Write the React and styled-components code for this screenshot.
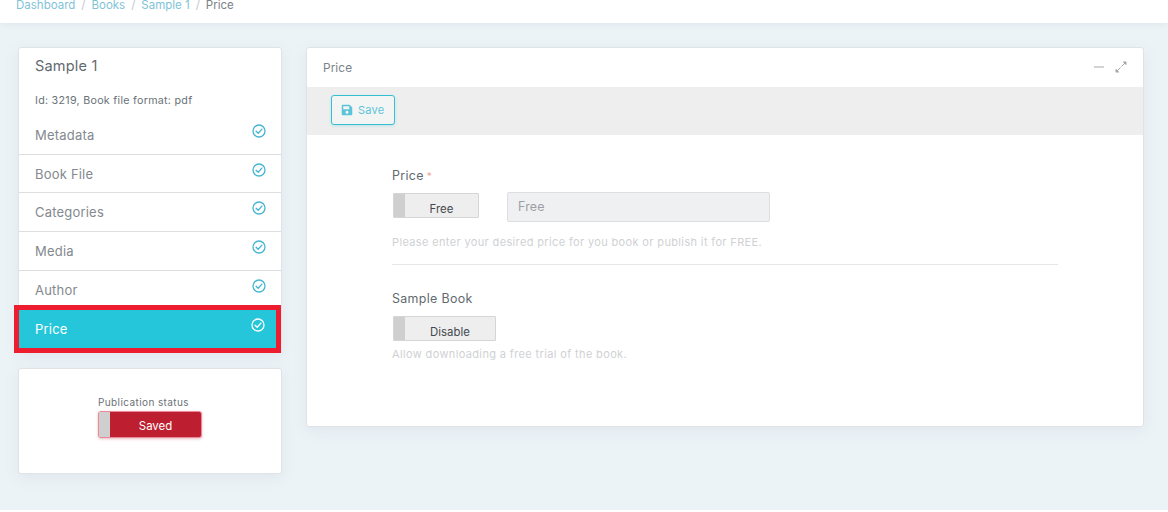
import React from "react";
import styled, { createGlobalStyle } from "styled-components";
import { FaSave } from "react-icons/fa";

const Global = createGlobalStyle`
  html, body { margin: 0; padding: 0; background: #ecf3f7; }
  body { font-family: "Inter", "Open Sans", "Liberation Sans", sans-serif; height: 512px; overflow: hidden; }
`;

const Header = styled.header`
  height: 23px;
  background: #fff;
  box-shadow: 0 1px 6px rgba(120, 140, 160, 0.12);
  overflow: hidden;
`;

const Crumbs = styled.div`
  display: flex;
  align-items: center;
  gap: 6px;
  padding-left: 16px;
  margin-top: -3px;
  height: 16px;
  font-size: 11.5px;
  color: #c4c9cd;
`;

const Crumb = styled.span`
  color: ${(p) => (p.$current ? "#7b8288" : "#7fc3d8")};
`;

const Page = styled.main`
  display: flex;
  align-items: flex-start;
  gap: 24px;
  height: 487px;
  box-sizing: border-box;
  padding: 24px 24px 0 18px;
`;

const BottomEdge = styled.footer`
  height: 2px;
  background: #fff;
`;

const Side = styled.aside`
  width: 264px;
  flex: none;
  display: flex;
  flex-direction: column;
  gap: 15px;
`;

const Card = styled.section`
  background: #fff;
  border: 1px solid #dfe3e6;
  border-radius: 3px;
  box-shadow: 0 4px 14px rgba(120, 140, 160, 0.1);
  box-sizing: border-box;
`;

const BookTitle = styled.h2`
  margin: 0;
  padding: 8px 16px 0;
  height: 26px;
  font-size: 14.5px;
  line-height: 20px;
  letter-spacing: 0.2px;
  font-weight: 400;
  color: #62696f;
`;

const BookInfo = styled.p`
  margin: 0;
  padding: 12px 16px 0;
  height: 22px;
  font-size: 10.7px;
  line-height: 14px;
  letter-spacing: 0.28px;
  color: #6b7278;
`;

const StepRow = styled.div`
  display: flex;
  justify-content: space-between;
  height: 38.7px;
  box-sizing: border-box;
  padding: 0 15px 0 16px;
  font-size: 13px;
  letter-spacing: 0.2px;
  color: ${(p) => (p.$active ? "#fff" : "#83898e")};
  background: ${(p) => (p.$active ? "#26c6da" : "transparent")};
  border-bottom: ${(p) => (p.$last ? "0" : "1px solid #dcdfe2")};
  align-items: center;

  ${(p) =>
    p.$active &&
    `
    height: 48px;
    margin: -4px 0 -1px -5px;
    padding: 0 11px 0 16px;
    border: 5px solid #ed1c2e;
    position: relative;
  `}

  svg {
    flex: none;
    margin-top: -8px;
    color: ${(p) => (p.$active ? "#fff" : "#45b5d1")};
  }
`;

const StatusCard = styled(Card)`
  height: 106px;
  display: flex;
  flex-direction: column;
  align-items: center;
  padding-top: 25px;
`;

const StatusBox = styled.div`
  width: 104px;
`;

const StatusLabel = styled.div`
  font-size: 10px;
  line-height: 16px;
  margin-bottom: 1px;
  letter-spacing: 0.4px;
  color: #6b7278;
  white-space: nowrap;
`;

const Toggle = styled.div`
  display: flex;
  align-items: stretch;
  box-sizing: border-box;
  width: ${(p) => p.$width}px;
  height: ${(p) => p.$height || 25}px;
  margin-left: ${(p) => (p.$on ? 0 : 1)}px;
  border: 1px solid ${(p) => (p.$on ? "#e88a99" : "#d3d5d7")};
  border-radius: ${(p) => (p.$on ? 3 : 1)}px;
  background: ${(p) => (p.$on ? "#bd1f30" : "#eeeeee")};
  color: ${(p) => (p.$on ? "#fff" : "#44494e")};
  font-size: 11.4px;
  box-shadow: ${(p) => (p.$on ? "0 1px 3px rgba(189,31,48,.3)" : "none")};
`;

const Knob = styled.span`
  width: 11px;
  flex: none;
  background: #cfcfcf;
`;

const ToggleText = styled.span`
  flex: 1;
  display: flex;
  align-items: center;
  justify-content: center;
  padding-top: ${(p) => (p.$on ? 3 : 7)}px;
`;

const PriceCard = styled(Card)`
  flex: 1;
  height: 380px;
`;

const CardHead = styled.div`
  height: 39px;
  display: flex;
  align-items: center;
  justify-content: space-between;
  padding: 0 16px;
  font-size: 11.8px;
  letter-spacing: 0.1px;
  color: #7b8288;
`;

const HeadTools = styled.div`
  display: flex;
  align-items: center;
  gap: 11px;
  color: #a3a7aa;
  margin-top: -1px;
`;

const Toolbar = styled.div`
  height: 48px;
  background: #eeeeee;
  display: flex;
  align-items: center;
  padding-left: 24px;
`;

const SaveButton = styled.button`
  display: flex;
  align-items: center;
  gap: 5px;
  box-sizing: border-box;
  width: 64px;
  height: 30px;
  margin-top: -2px;
  padding: 0 9px;
  background: #f3f5f5;
  border: 1px solid #36bfd3;
  border-radius: 3px;
  color: #5cc4d8;
  font: inherit;
  font-size: 11px;
  letter-spacing: 0.2px;
  box-shadow: 0 1px 3px rgba(38, 198, 218, 0.25);
`;

const FormBody = styled.div`
  padding: 33px 85px 0;
`;

const FieldLabel = styled.div`
  font-size: 12.4px;
  line-height: 16px;
  letter-spacing: 0.35px;
  color: #62696f;

  em {
    font-style: normal;
    color: #f0a98c;
    font-size: 10px;
    margin-left: 3px;
  }
`;

const PriceRow = styled.div`
  display: flex;
  align-items: flex-start;
  gap: 28px;
  margin-top: 8px;
`;

const ToggleSlot = styled.div`
  padding-top: 1px;
`;

const ReadonlyInput = styled.div`
  box-sizing: border-box;
  width: 263px;
  height: 30px;
  display: flex;
  align-items: center;
  padding: 0 0 2px 10px;
  background: #eff0f2;
  border: 1px solid #dcdee0;
  border-radius: 2px;
  font-size: 12.4px;
  letter-spacing: 0.2px;
  color: #9a9fa3;
`;

const Hint = styled.p`
  margin: ${(p) => p.$top}px 0 0;
  font-size: 11px;
  line-height: 14px;
  letter-spacing: 0.36px;
  color: #cfd1d4;
`;

const Rule = styled.hr`
  margin: 15px 0 26px;
  border: 0;
  border-top: 1px solid #e4e6e8;
`;

const SampleToggle = styled.div`
  margin-top: 9px;
`;

const CheckIcon = () => (
  <svg width="14" height="14" viewBox="0 0 14 14" fill="none" stroke="currentColor" strokeWidth="1.3">
    <circle cx="7" cy="7" r="6" />
    <path d="M4.1 7.2l2.1 2.1 3.7-4.2" strokeLinecap="round" strokeLinejoin="round" />
  </svg>
);

const Expand = () => (
  <svg width="12" height="12" viewBox="0 0 12 12" fill="currentColor" stroke="currentColor" strokeWidth="1">
    <path d="M6.5 5.5L10 2" fill="none" />
    <path d="M8 .8h3.2V4z" strokeWidth="0.4" />
    <path d="M5.5 6.5L2 10" fill="none" />
    <path d="M.8 8v3.2H4z" strokeWidth="0.4" />
  </svg>
);

const Minimize = () => (
  <svg width="10" height="12" viewBox="0 0 10 12" stroke="currentColor" strokeWidth="1">
    <path d="M0 6h10" />
  </svg>
);

const steps = ["Metadata", "Book File", "Categories", "Media", "Author"];

export default function App() {
  return (
    <>
      <Global />
      <Header>
        <Crumbs>
          <Crumb>Dashboard</Crumb>/<Crumb>Books</Crumb>/<Crumb>Sample 1</Crumb>/<Crumb $current>Price</Crumb>
        </Crumbs>
      </Header>
      <Page>
        <Side>
          <Card>
            <BookTitle>Sample 1</BookTitle>
            <BookInfo>Id: 3219, Book file format: pdf</BookInfo>
            {steps.map((s) => (
              <StepRow key={s}>
                {s}
                <CheckIcon />
              </StepRow>
            ))}
            <StepRow $active $last>
              Price
              <CheckIcon />
            </StepRow>
          </Card>
          <StatusCard>
            <StatusBox>
              <StatusLabel>Publication status</StatusLabel>
              <Toggle $on $width={104} $height={27}>
                <Knob />
                <ToggleText $on>Saved</ToggleText>
              </Toggle>
            </StatusBox>
          </StatusCard>
        </Side>
        <PriceCard>
          <CardHead>
            Price
            <HeadTools>
              <Minimize />
              <Expand />
            </HeadTools>
          </CardHead>
          <Toolbar>
            <SaveButton>
              <FaSave size={12} />
              Save
            </SaveButton>
          </Toolbar>
          <FormBody>
            <FieldLabel>
              Price<em>*</em>
            </FieldLabel>
            <PriceRow>
              <ToggleSlot>
                <Toggle $width={86}>
                  <Knob />
                  <ToggleText>Free</ToggleText>
                </Toggle>
              </ToggleSlot>
              <ReadonlyInput>Free</ReadonlyInput>
            </PriceRow>
            <Hint $top={13}>Please enter your desired price for you book or publish it for FREE.</Hint>
            <Rule />
            <FieldLabel>Sample Book</FieldLabel>
            <SampleToggle>
              <Toggle $width={103}>
                <Knob />
                <ToggleText>Disable</ToggleText>
              </Toggle>
            </SampleToggle>
            <Hint $top={6}>Allow downloading a free trial of the book.</Hint>
          </FormBody>
        </PriceCard>
      </Page>
      <BottomEdge />
    </>
  );
}
